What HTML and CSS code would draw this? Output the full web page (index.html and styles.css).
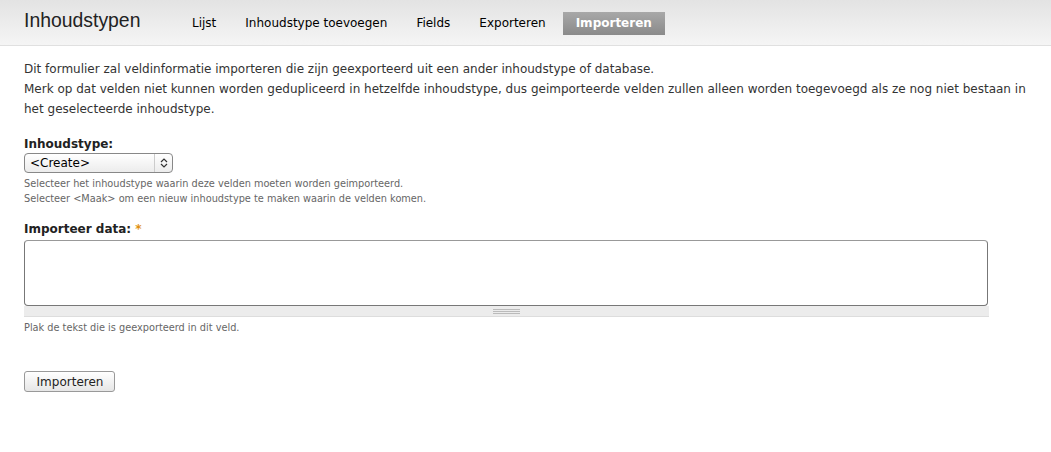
FILE: index.html
```html
<!DOCTYPE html>
<html lang="nl">
<head>
<meta charset="utf-8">
<title>Inhoudstypen</title>
<link rel="stylesheet" href="styles.css">
</head>
<body>
<div class="header">
  <h1 class="page-title">Inhoudstypen</h1>
  <ul class="tabs">
    <li><a href="#">Lijst</a></li>
    <li><a href="#">Inhoudstype toevoegen</a></li>
    <li><a href="#">Fields</a></li>
    <li><a href="#">Exporteren</a></li>
    <li class="active"><a href="#">Importeren</a></li>
  </ul>
</div>
<div class="content">
  <p class="intro">Dit formulier zal veldinformatie importeren die zijn geexporteerd uit een ander inhoudstype of database.<br>Merk op dat velden niet kunnen worden gedupliceerd in hetzelfde inhoudstype, dus geimporteerde velden zullen alleen worden toegevoegd als ze nog niet bestaan in het geselecteerde inhoudstype.</p>
  <div class="form-item">
    <label class="label">Inhoudstype:</label>
    <div class="select">
      <span class="select-value">&lt;Create&gt;</span>
      <span class="select-arrow"><svg width="8" height="10" viewBox="0 0 8 10"><path d="M1 4 L4 1 L7 4 M1 6 L4 9 L7 6" fill="none" stroke="#333" stroke-width="1.2"/></svg></span>
    </div>
    <div class="description">Selecteer het inhoudstype waarin deze velden moeten worden geimporteerd.<br>Selecteer &lt;Maak&gt; om een nieuw inhoudstype te maken waarin de velden komen.</div>
  </div>
  <div class="form-item">
    <label class="label">Importeer data: <span class="req">*</span></label>
    <div class="textarea-wrap">
      <div class="textarea"></div>
      <div class="grippie"><span class="grip"></span></div>
    </div>
    <div class="description">Plak de tekst die is geexporteerd in dit veld.</div>
  </div>
  <div class="actions">
    <button class="button" type="button">Importeren</button>
  </div>
</div>
</body>
</html>
```
FILE: styles.css
```css
html, body {
  margin: 0;
  padding: 0;
  background: #fff;
}
body {
  font-family: "DejaVu Sans", Verdana, sans-serif;
  font-size: 12px;
  color: #333;
}
.header {
  height: 46px;
  box-sizing: border-box;
  background: linear-gradient(#e3e3e3, #f5f5f5);
  border-bottom: 1px solid #e0e0e0;
  display: flex;
  align-items: flex-start;
  padding: 0 0 0 24px;
}
.page-title {
  margin: 9px 0 0 0;
  font-family: "Liberation Sans", Arial, sans-serif;
  font-weight: normal;
  font-size: 19.4px;
  color: #222;
  width: 156px;
}
.tabs {
  list-style: none;
  margin: 12px 0 0 0;
  padding: 0;
  display: flex;
  gap: 5px;
}
.tabs li a {
  display: block;
  padding: 0 12px;
  height: 23px;
  line-height: 23px;
  font-size: 12px;
  color: #000;
  text-decoration: none;
}
.tabs li.active a {
  background: linear-gradient(#a8a8a8, #8a8a8a);
  color: #fff;
  font-weight: bold;
  padding: 0 13px;
}
.content {
  padding: 13px 24px 0 24px;
}
.intro {
  margin: 0 0 17px 0;
  font-size: 12px;
  line-height: 20px;
  color: #333;
  max-width: 1008px;
}
.form-item {
  margin-bottom: 15px;
}
.label {
  display: block;
  font-weight: bold;
  font-size: 12px;
  color: #222;
  line-height: 16px;
  margin-bottom: 1px;
}
.req {
  color: #e09010;
}
.select {
  width: 149px;
  height: 20px;
  box-sizing: border-box;
  border: 1px solid #888;
  border-radius: 4px;
  background: linear-gradient(#fff, #ececec);
  display: flex;
  align-items: center;
  font-size: 12px;
  color: #000;
}
.select-value {
  flex: 1;
  padding-left: 5px;
}
.select-arrow {
  width: 17px;
  height: 18px;
  border-left: 1px solid #ccc;
  display: flex;
  align-items: center;
  justify-content: center;
}
.description {
  font-size: 9.75px;
  line-height: 15px;
  color: #666;
  margin-top: 3px;
}
.textarea-wrap {
  width: 965px;
  margin-top: 3px;
}
.textarea {
  height: 66px;
  box-sizing: border-box;
  border: 1px solid #777;
  border-top-color: #999;
  border-radius: 4px;
  background: #fff;
  margin-right: 1px;
}
.grippie {
  height: 11px;
  background: #ececec;
  border-bottom: 1px solid #ddd;
  box-sizing: border-box;
  display: flex;
  align-items: center;
  justify-content: center;
}
.grip {
  width: 27px;
  height: 5px;
  border-top: 1px solid #bbb;
  border-bottom: 1px solid #bbb;
  box-sizing: border-box;
  background: linear-gradient(#ececec 1px, #bbb 1px, #bbb 2px, #ececec 2px);
}
.actions {
  margin-top: 36px;
}
.button {
  font-family: "DejaVu Sans", Verdana, sans-serif;
  font-size: 12px;
  color: #222;
  width: 91px;
  height: 21px;
  padding: 0 0 0 1px;
  border: 1px solid #999;
  border-radius: 3px;
  background: linear-gradient(#fff, #e6e6e6);
}
```
